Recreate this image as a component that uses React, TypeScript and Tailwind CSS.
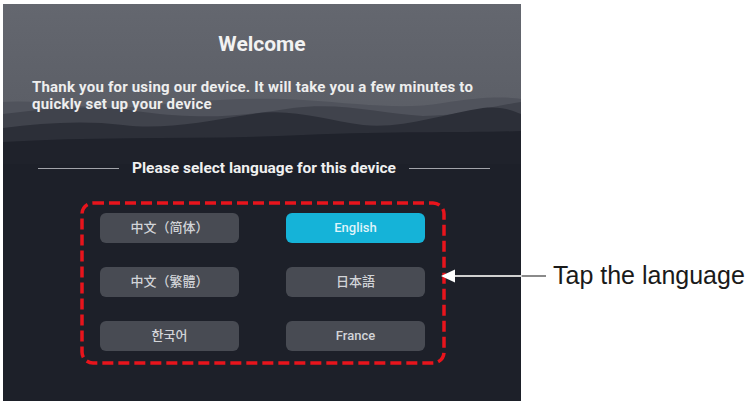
import React from "react";

const langs: { label: string; active?: boolean }[] = [
  { label: "中文（简体）" },
  { label: "English", active: true },
  { label: "中文（繁體）" },
  { label: "日本語" },
  { label: "한국어" },
  { label: "France" },
];

function Mountains() {
  return (
    <svg
      className="absolute left-0 top-0"
      width="518"
      height="160"
      viewBox="0 0 518 160"
      preserveAspectRatio="none"
    >
      <defs>
        <linearGradient id="sky" x1="0" y1="0" x2="0" y2="1">
          <stop offset="0" stopColor="#64676f" />
          <stop offset="0.7" stopColor="#5b5e66" />
          <stop offset="1" stopColor="#52555d" />
        </linearGradient>
      </defs>
      <rect x="0" y="0" width="518" height="160" fill="url(#sky)" />
      <path
        d="M0,98 C40,95 80,106 130,103 C190,98 240,92 300,96 C360,100 400,106 440,99 C470,94 500,92 518,95 L518,160 L0,160 Z"
        fill="#50535c"
      />
      <path
        d="M0,110 C50,104 90,100 140,108 C200,116 240,112 290,104 C340,98 380,110 420,112 C460,112 490,102 518,98 L518,160 L0,160 Z"
        fill="#40434c"
      />
      <path
        d="M0,124 C40,119 80,116 120,121 C160,126 200,118 250,110 C290,104 320,116 360,121 C400,125 440,110 480,104 C500,102 510,107 518,110 L518,160 L0,160 Z"
        fill="#2c2f38"
      />
      <path
        d="M0,138 C100,132 200,136 300,131 C400,127 460,129 518,127 L518,160 L0,160 Z"
        fill="#1f222b"
      />
    </svg>
  );
}

export default function App() {
  return (
    <div
      className="relative w-[756px] h-[401px] bg-white overflow-hidden flex"
      style={{ fontFamily: "Roboto, 'Noto Sans CJK SC', sans-serif" }}
    >
      <div className="ml-[3px] mt-[4px] w-[518px] h-[397px] relative bg-[#1d2029] overflow-hidden shrink-0">
        <Mountains />
        <div className="relative flex flex-col">
          <h1 className="mt-[26px] text-center text-[21px] leading-[28px] font-bold text-[#f2f2f2]">
            Welcome
          </h1>
          <p className="mt-[21px] pl-[29px] pr-[10px] text-[15px] leading-[17px] font-bold tracking-[0.2px] text-[#eeeeee] whitespace-nowrap">
            Thank you for using our device. It will take you a few minutes to
            <br />
            quickly set up your device
          </p>
          <div className="mt-[46px] flex items-center pl-[35px] pr-[31px] gap-[13px]">
            <div className="flex-1 h-px bg-[#a2a4aa]" />
            <span className="text-[15.5px] leading-[18px] font-bold text-[#f0f0f0]">
              Please select language for this device
            </span>
            <div className="flex-1 h-px bg-[#a2a4aa]" />
          </div>
          <div className="mt-[24px] ml-[77px] w-[366px] relative pt-[12px] pb-[14px] pl-[20px] pr-[21px]">
            <svg className="absolute inset-0" width="366" height="164">
              <rect
                x="2"
                y="2"
                width="362"
                height="160"
                rx="11"
                ry="11"
                fill="none"
                stroke="#e8141c"
                strokeWidth="3.5"
                strokeDasharray="11 5"
              />
            </svg>
            <div className="relative grid grid-cols-2 gap-x-[47px] gap-y-[24px]">
              {langs.map((l) => (
                <div
                  key={l.label}
                  className={
                    "h-[30px] rounded-[6px] flex items-center justify-center text-[13px] font-medium " +
                    (l.active
                      ? "bg-[#15b3d8] text-[#dff4fa]"
                      : "bg-[#484b53] text-[#d2d4d8]")
                  }
                >
                  {l.label}
                </div>
              ))}
            </div>
          </div>
        </div>
      </div>
      <div className="self-start mt-[260px] pl-[32px]">
        <span
          className="block text-[25px] leading-[30px] text-[#1a1a1a] whitespace-nowrap"
          style={{ fontFamily: "'Liberation Sans', Arial, sans-serif" }}
        >
          Tap the language
        </span>
      </div>
      <svg className="absolute left-[438px] top-[268px]" width="110" height="16">
        <line x1="12" y1="8" x2="108" y2="8" stroke="#d0d0d0" strokeWidth="2" />
        <line x1="84" y1="8" x2="108" y2="8" stroke="#8a8a8a" strokeWidth="2" />
        <polygon points="3,8 17,1.5 17,14.5" fill="#ffffff" />
      </svg>
    </div>
  );
}
